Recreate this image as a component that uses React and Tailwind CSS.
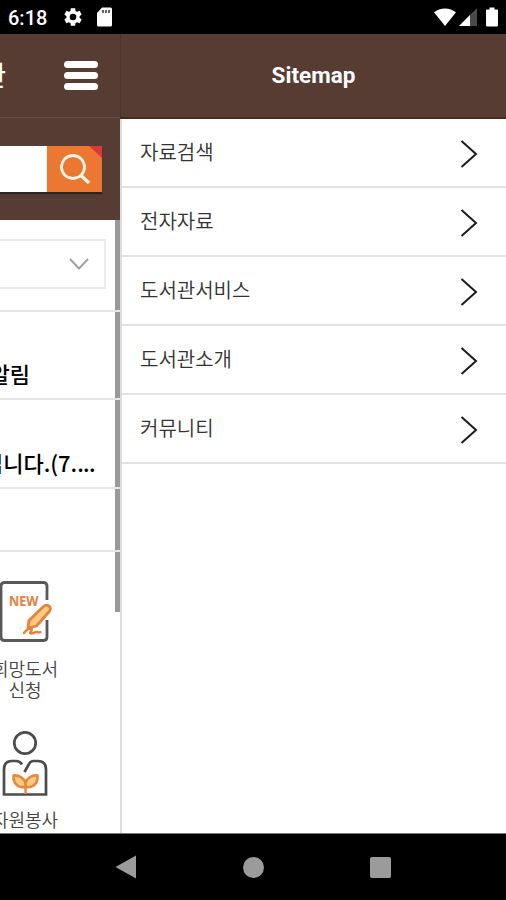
import React from "react";

const menuItems = ["자료검색", "전자자료", "도서관서비스", "도서관소개", "커뮤니티"];

function StatusBar() {
  return (
    <div className="h-[34px] shrink-0 bg-black text-white flex items-center px-2">
      <span className="font-['Roboto',sans-serif] text-[20px] font-medium leading-none pt-0.5 w-[55px] whitespace-nowrap">
        6:18
      </span>
      <svg viewBox="0 0 24 24" className="w-[22px] h-[22px] -ml-px" fill="currentColor">
        <path d="M19.14 12.94c.04-.3.06-.61.06-.94 0-.32-.02-.64-.07-.94l2.03-1.58c.18-.14.23-.41.12-.61l-1.92-3.32c-.12-.22-.37-.29-.59-.22l-2.39.96c-.5-.38-1.03-.7-1.62-.94l-.36-2.54c-.04-.24-.24-.41-.48-.41h-3.84c-.24 0-.43.17-.47.41l-.36 2.54c-.59.24-1.13.57-1.62.94l-2.39-.96c-.22-.08-.47 0-.59.22L2.74 8.87c-.12.21-.08.47.12.61l2.03 1.58c-.05.3-.09.63-.09.94s.02.64.07.94l-2.03 1.58c-.18.14-.23.41-.12.61l1.92 3.32c.12.22.37.29.59.22l2.39-.96c.5.38 1.03.7 1.62.94l.36 2.54c.05.24.24.41.48.41h3.84c.24 0 .44-.17.47-.41l.36-2.54c.59-.24 1.13-.56 1.62-.94l2.39.96c.22.08.47 0 .59-.22l1.92-3.32c.12-.22.07-.47-.12-.61l-2.01-1.58zM12 15.6a3.6 3.6 0 1 1 0-7.2 3.6 3.6 0 0 1 0 7.2z" />
      </svg>
      <svg viewBox="0 0 15 20" className="w-[15px] h-5 ml-[13px]">
        <path d="M5 .5h8.500Q15 .5 15 2v16q0 1.500-1.500 1.500h-12Q0 19.500 0 18V6z" fill="#fff" />
        <path d="M6 3v3M9 3v3M12 3v3" stroke="#333" strokeWidth="1.500" />
      </svg>

      {/* Right side - network and battery */}
      <div className="ml-auto flex items-center">
        <svg viewBox="0 0 22 18" className="w-[22px] h-[18px]" fill="#fff">
          <path d="M11 18L0 4.200Q4.800.4 11 .4T22 4.200z" />
        </svg>
        <svg viewBox="0 0 18 18" className="w-[18px] h-[18px] ml-[3px]">
          <path d="M18 0v18H0z" fill="#4a4a4a" />
          <path d="M11 7v11H0z" fill="#fff" />
        </svg>
        <svg viewBox="0 0 12 20" className="w-3 h-5 ml-[9px]" fill="#fff">
          <path d="M3.500.5h5v2H11q1 0 1 1v15q0 1-1 1H1q-1 0-1-1v-15q0-1 1-1h2.500z" />
        </svg>
      </div>
    </div>
  );
}

function NewBookIcon() {
  return (
    <svg viewBox="0 0 52 62" className="w-[52px] h-[62px]" fill="none">
      <path
        d="M47 19V5q0-3.500-3.500-3.500H4.500Q1 1.500 1 5v51q0 3.500 3.500 3.500h39q3.500 0 3.500-3.500V39"
        stroke="#595757"
        strokeWidth="2.800"
      />
      <text
        x="9"
        y="24.500"
        fill="#e8803f"
        fontFamily="Open Sans, sans-serif"
        fontWeight="700"
        fontSize="13.500"
        textLength="29.500"
        lengthAdjust="spacingAndGlyphs"
      >
        NEW
      </text>
      <path
        d="M29 39.500L43.500 25.500q3-2.500 5.500-.5 2.500 2.500.3 5.500L36.500 45l-8.500 2z"
        fill="#fccb7d"
        stroke="#e8803f"
        strokeWidth="2.800"
        strokeLinejoin="round"
      />
      <path
        d="M24 52q4-5 7-4.500c3 .5-3 5 0 5 3 0 4-2 6-1.500s1.500 1 3.500.2"
        stroke="#e8803f"
        strokeWidth="2.400"
        strokeLinecap="round"
      />
    </svg>
  );
}

function VolunteerIcon() {
  return (
    <svg viewBox="0 0 46 66" className="w-[46px] h-[66px]" fill="none">
      <circle cx="23" cy="12" r="10.700" stroke="#4d4b4b" strokeWidth="2.700" />
      <path
        d="M20 33.500q-2-3.500-6-3.500H10q-8 0-8 8.500V63.500H44V38.500q0-8.500-8.500-8.500h-4q-3 0-4.500 3L22.500 41"
        stroke="#4d4b4b"
        strokeWidth="2.700"
      />
      <path
        d="M23.500 56q1-6-4-9.500-4-2.500-8-2-.5 4 1.500 7.500 3.500 5 10.500 4zM23.500 56q-1-6 4-9.500 4-2.500 8-2 .5 4-1.500 7.500-3.500 5-10.500 4z"
        fill="#fccb7d"
        stroke="#e8883f"
        strokeWidth="2.600"
        strokeLinejoin="round"
      />
      <path d="M23.500 55v8" stroke="#e8883f" strokeWidth="2.400" />
    </svg>
  );
}

// Main page, pushed to the left while the drawer is open
function MainPage() {
  return (
    <div className="w-[120px] shrink-0 relative flex flex-col overflow-hidden bg-white text-black">
      <div className="h-[84px] shrink-0 bg-[#573c33] border-b border-[#684b42] flex items-center justify-between">
        <div className="w-[6px] flex justify-end">
          <span className="text-white text-[27px] font-medium whitespace-nowrap">도서관</span>
        </div>
        <div className="w-[34px] mr-[22px] flex flex-col gap-1">
          <span className="h-[7px] rounded-full bg-white"></span>
          <span className="h-[7px] rounded-full bg-white"></span>
          <span className="h-[7px] rounded-full bg-white"></span>
        </div>
      </div>

      <div className="h-[102px] shrink-0 bg-[#573c33] pt-[28px] pr-[18px]">
        <div className="h-[46px] flex bg-white shadow-[0_2px_1px_#2b2522]">
          <div className="flex-1"></div>
          <svg viewBox="0 0 55 46" className="w-[55px] h-[46px] bg-[#ec7731]" fill="none">
            <path d="M42 0h13v12z" fill="#dc3838" />
            <circle cx="26" cy="21" r="11.500" stroke="#fff5ea" strokeWidth="2.800" />
            <path d="M34 29.500l8 7.500" stroke="#fff5ea" strokeWidth="3.400" />
          </svg>
        </div>
      </div>

      <div className="relative z-10 h-[92px] shrink-0 border-b-2 border-[#e6e6e6] pt-[19px]">
        <div className="h-[50px] w-[106px] border-2 border-l-0 border-[#ebebeb] flex items-center justify-end pr-[15px]">
          <svg viewBox="0 0 20 12" className="w-5 h-3" fill="none">
            <path d="M1 1l9 9.500L19 1" stroke="#a0a0a0" strokeWidth="1.900" />
          </svg>
        </div>
      </div>
      <div className="relative z-10 h-[88px] shrink-0 border-b-2 border-[#e6e6e6] flex items-end pb-[9px]">
        <div className="w-[30px] flex justify-end">
          <span className="text-[22px] leading-8 font-medium whitespace-nowrap">알림</span>
        </div>
      </div>
      <div className="relative z-10 h-[89px] shrink-0 border-b-2 border-[#e6e6e6] flex items-end pb-[9px]">
        <div className="w-[95px] flex justify-end">
          <span className="text-[22px] leading-8 font-medium whitespace-nowrap">
            입니다.(7.<span className="tracking-[-0.6px]">...</span>
          </span>
        </div>
      </div>
      <div className="relative z-10 h-[63px] shrink-0 border-b-2 border-[#e6e6e6]"></div>

      {/* Shortcuts */}
      <div className="flex flex-col text-[#444] text-[18px] leading-[21px] font-[350]">
        <div className="mt-[29px]">
          <NewBookIcon />
        </div>
        <div className="w-[50px] mt-[15px] flex flex-col items-center whitespace-nowrap">
          <span>희망도서</span>
          <span>신청</span>
        </div>
        <div className="mt-[31px] ml-[2px]">
          <VolunteerIcon />
        </div>
        <div className="w-[50px] mt-[12px] flex justify-center whitespace-nowrap">자원봉사</div>
      </div>

      {/* Scrollbar */}
      <div className="absolute top-[186px] right-0 w-[5px] h-[392px] bg-[#999]"></div>
    </div>
  );
}

function Sitemap() {
  return (
    <div className="flex-1 flex flex-col bg-white">
      <div className="h-[85px] shrink-0 bg-[#573c33] border-b-2 border-[#4a2817] border-l border-l-[#4a332b] flex items-center justify-center">
        <h1 className="font-['Roboto',sans-serif] text-[22.5px] font-bold text-white">Sitemap</h1>
      </div>
      <div className="flex-1 border-l-2 border-[#dedede]">
        {menuItems.map((item) => (
          <div
            key={item}
            className="h-[69px] flex items-center justify-between pl-[18px] pr-[28px] border-b-2 border-[#e2e2e2]"
          >
            <span className="text-[20px] leading-8 -mt-0.5 text-[#333] font-[350]">{item}</span>
            <svg viewBox="0 0 18 30" className="w-[18px] h-[30px] mt-[2px]" fill="none">
              <path d="M1.500 2L16 15 1.500 28" stroke="#1c1c1c" strokeWidth="2" />
            </svg>
          </div>
        ))}
      </div>
    </div>
  );
}

function NavBar() {
  return (
    <div className="h-[67px] shrink-0 bg-black border-t border-[#777] flex items-center justify-between pl-[115px] pr-[115px]">
      <svg viewBox="0 0 22 24" className="w-[22px] h-6">
        <path d="M21 .5v23L.5 12z" fill="#9b9b9b" />
      </svg>
      <span className="size-[21px] rounded-full bg-[#9b9b9b]"></span>
      <span className="size-[21px] rounded-[2px] bg-[#9b9b9b]"></span>
    </div>
  );
}

function App() {
  return (
    <div className="w-[506px] h-[900px] flex flex-col overflow-hidden font-['Noto_Sans_CJK_KR',sans-serif]">
      <StatusBar />
      <div className="flex-1 min-h-0 flex">
        <MainPage />
        <Sitemap />
      </div>
      <NavBar />
    </div>
  );
}

export default App;
